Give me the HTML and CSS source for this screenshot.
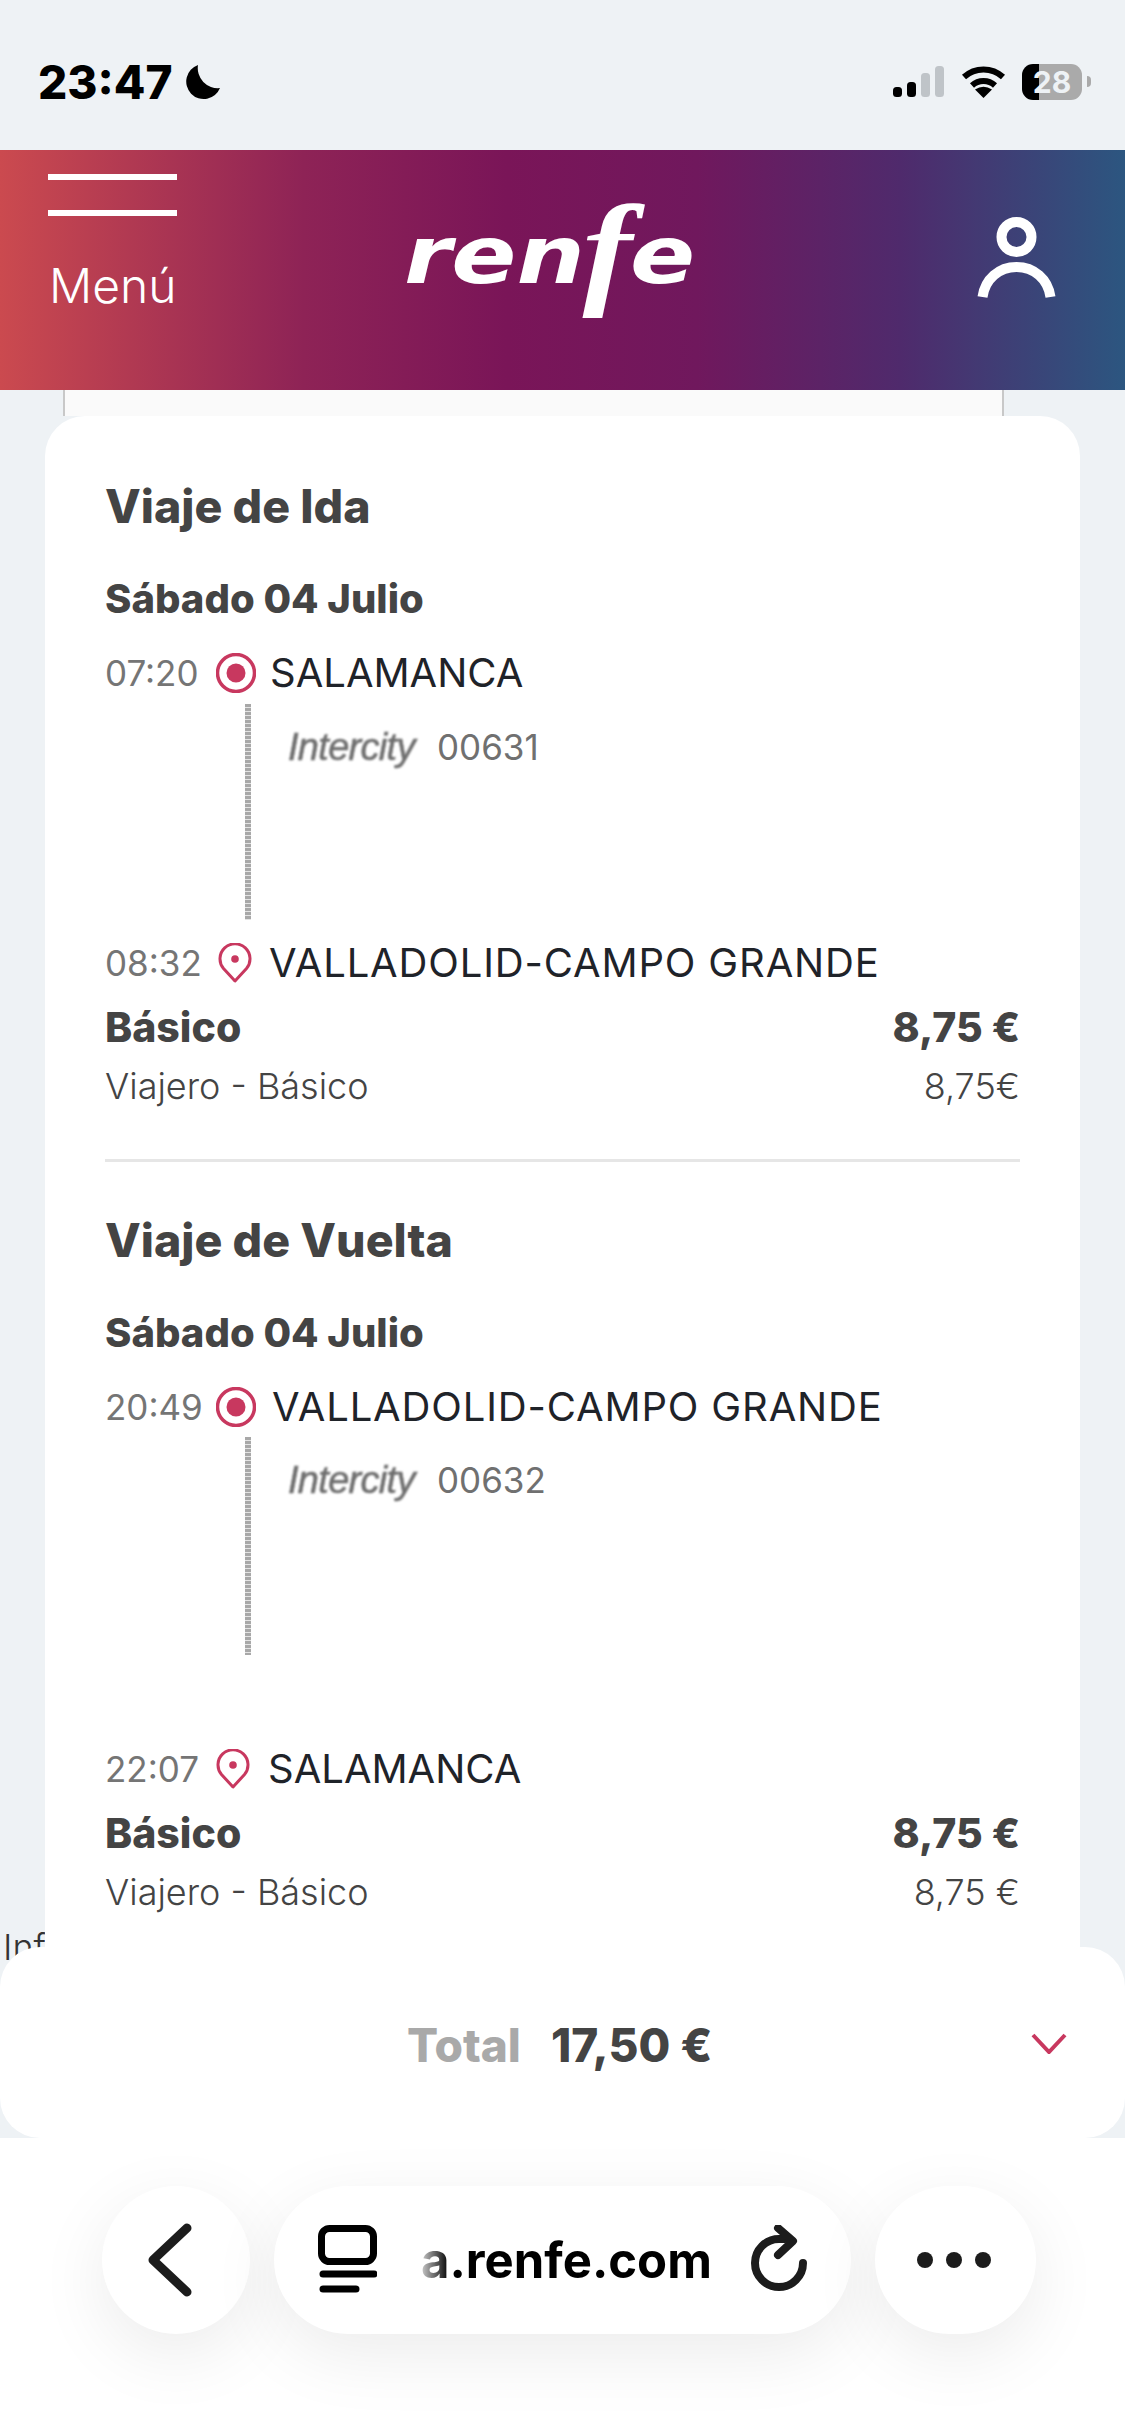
FILE: index.html
```html
<!DOCTYPE html>
<html lang="es">
<head>
  <meta charset="UTF-8">
  <title>Renfe - Resumen del viaje</title>
  <link rel="stylesheet" href="styles.css">
</head>
<body>
  <div id="page">
    <div class="status-bar">
      <div class="status-left">
        <span class="clock">23:47</span>
        <svg class="moon" viewBox="0 0 36 35" width="36" height="35"><path d="M14 0A17.5 17.5 0 1 0 36 23A20 20 0 0 1 14 0Z" fill="#000"/></svg>
      </div>
      <div class="status-right">
        <svg viewBox="0 0 51 31" width="51" height="31">
          <rect x="0" y="21" width="9" height="10" rx="3.5" fill="#000"/>
          <rect x="14" y="16" width="9" height="15" rx="3.5" fill="#000"/>
          <rect x="28" y="7" width="9" height="24" rx="3.5" fill="#bfc4c8"/>
          <rect x="42" y="0" width="9" height="31" rx="3.5" fill="#bfc4c8"/>
        </svg>
        <svg class="wifi" viewBox="0 0 45 33" width="45" height="33">
          <path d="M3 12A29 29 0 0 1 42 12" fill="none" stroke="#000" stroke-width="6"/>
          <path d="M11 20.5A17 17 0 0 1 34 20.5" fill="none" stroke="#000" stroke-width="6"/>
          <path d="M22.5 33L14 24.5Q22.5 19 31 24.5Z" fill="#000"/>
        </svg>
        <div class="battery">28</div>
      </div>
    </div>

    <header class="topbar">
      <div class="menu">
        <span class="menu-line"></span>
        <span class="menu-line"></span>
        <span class="menu-label">Menú</span>
      </div>
      <div class="logo"><span>ren</span><span class="logo-f">f</span><span>e</span></div>
      <svg class="user" viewBox="0 0 79 81" width="79" height="81">
        <circle cx="39.5" cy="20" r="15" fill="none" stroke="#fff" stroke-width="10"/>
        <path d="M5.5 80C8 62 22 50 39.5 50C57 50 71 62 73.5 80" fill="none" stroke="#fff" stroke-width="10"/>
      </svg>
    </header>

    <main class="content">
      <div class="behind-text">Información</div>
      <div class="backdrop"></div>
      <section class="card">
        <h2 class="trip-title">Viaje de Ida</h2>
        <h3 class="trip-date">Sábado 04 Julio</h3>
        <div class="stop stop-first">
          <span class="time">07:20</span>
          <svg class="stop-icon" viewBox="0 0 40 40" width="40" height="40"><circle cx="20" cy="20" r="18.5" fill="none" stroke="#c8385f" stroke-width="3.5"/><circle cx="20" cy="20" r="9.5" fill="#c8385f"/></svg>
          <span class="station">SALAMANCA</span>
        </div>
        <div class="leg">
          <span class="leg-line"></span>
          <span class="train-logo">Intercity</span>
          <span class="train-number">00631</span>
        </div>
        <div class="stop stop-arrival">
          <span class="time">08:32</span>
          <svg class="stop-icon" viewBox="0 0 34 40" width="34" height="40"><path d="M17 38L5.500 25.500A15 15 0 1 1 28.500 25.500Z" fill="none" stroke="#c8385f" stroke-width="3" stroke-linejoin="round"/><circle cx="17" cy="16" r="3.800" fill="#c8385f"/></svg>
          <span class="station station-long">VALLADOLID-CAMPO GRANDE</span>
        </div>
        <div class="fare">
          <span>Básico</span>
          <span>8,75 €</span>
        </div>
        <div class="fare-detail">
          <span>Viajero - Básico</span>
          <span>8,75€</span>
        </div>
        <div class="divider"></div>
        <h2 class="trip-title trip-title-next">Viaje de Vuelta</h2>
        <h3 class="trip-date">Sábado 04 Julio</h3>
        <div class="stop stop-return">
          <span class="time">20:49</span>
          <svg class="stop-icon" viewBox="0 0 40 40" width="40" height="40"><circle cx="20" cy="20" r="18.5" fill="none" stroke="#c8385f" stroke-width="3.5"/><circle cx="20" cy="20" r="9.5" fill="#c8385f"/></svg>
          <span class="station station-long">VALLADOLID-CAMPO GRANDE</span>
        </div>
        <div class="leg leg-return">
          <span class="leg-line"></span>
          <span class="train-logo">Intercity</span>
          <span class="train-number">00632</span>
        </div>
        <div class="stop stop-last">
          <span class="time">22:07</span>
          <svg class="stop-icon" viewBox="0 0 34 40" width="34" height="40"><path d="M17 38L5.500 25.500A15 15 0 1 1 28.500 25.500Z" fill="none" stroke="#c8385f" stroke-width="3" stroke-linejoin="round"/><circle cx="17" cy="16" r="3.800" fill="#c8385f"/></svg>
          <span class="station">SALAMANCA</span>
        </div>
        <div class="fare">
          <span>Básico</span>
          <span>8,75 €</span>
        </div>
        <div class="fare-detail">
          <span>Viajero - Básico</span>
          <span>8,75 €</span>
        </div>
      </section>
    </main>

    <div class="total">
      <span class="total-label">Total</span>
      <span class="total-amount">17,50 €</span>
      <svg class="total-arrow" viewBox="0 0 36 21" width="36" height="21"><path d="M2 2L18 19L34 2" fill="none" stroke="#c8385f" stroke-width="4"/></svg>
    </div>

    <nav class="toolbar">
      <div class="pill pill-back">
        <svg viewBox="0 0 46 74" width="46" height="74"><path d="M40 5L6 37L40 69" fill="none" stroke="#1c1c1c" stroke-width="9" stroke-linecap="round" stroke-linejoin="round"/></svg>
      </div>
      <div class="pill pill-url">
        <svg viewBox="0 0 59 70" width="59" height="70">
          <rect x="3.500" y="3.500" width="52" height="33" rx="8" fill="none" stroke="#000" stroke-width="7"/>
          <path d="M5 49H56" stroke="#000" stroke-width="7" stroke-linecap="round"/>
          <path d="M5 64H38" stroke="#000" stroke-width="7" stroke-linecap="round"/>
        </svg>
        <span class="url-text">a.renfe.com</span>
        <svg class="reload" viewBox="0 0 58 70" width="58" height="70"><path d="M52 38A24 24 0 1 1 28 14H34" fill="none" stroke="#1c1c1c" stroke-width="8" stroke-linecap="round"/><path d="M27 3L42 16L27 30" fill="none" stroke="#1c1c1c" stroke-width="8" stroke-linecap="round" stroke-linejoin="round"/></svg>
      </div>
      <div class="pill pill-more">
        <span class="dot"></span><span class="dot"></span><span class="dot"></span>
      </div>
    </nav>
  </div>
</body>
</html>
```

FILE: styles.css
```css
body, html {
  margin: 0;
  padding: 0;
  background: #eef2f5;
  font-family: 'Inter', 'Liberation Sans', sans-serif;
}
#page {
  width: 1125px;
  height: 2436px;
  overflow: hidden;
  display: flex;
  flex-direction: column;
}

/* status bar */
.status-bar {
  height: 150px;
  flex: none;
  display: flex;
  justify-content: space-between;
  padding: 56px 43px 0 38px;
  box-sizing: border-box;
}
.status-left {
  display: flex;
  gap: 12px;
  height: 52px;
  align-items: center;
}
.clock {
  font-size: 46px;
  line-height: 52px;
  font-weight: 800;
  color: #000;
}
.status-right {
  display: flex;
  align-items: flex-start;
  height: 44px;
  margin-top: 8px;
}
.status-right svg {
  flex: none;
  margin-top: 2px;
}
.status-right .wifi {
  margin-left: 17px;
  margin-top: 1px;
}
.battery {
  position: relative;
  width: 60px;
  height: 36px;
  margin-left: 16px;
  border-radius: 11px;
  background: linear-gradient(90deg, #000 17px, #aaaaaa 17px);
  color: #eef2f5;
  font-size: 30px;
  font-weight: 700;
  line-height: 36px;
  text-align: center;
}
.battery::after {
  content: "";
  position: absolute;
  left: 65px;
  top: 12px;
  width: 4px;
  height: 11px;
  border-radius: 0 4px 4px 0;
  background: #aaaaaa;
}

/* renfe header */
.topbar {
  height: 240px;
  flex: none;
  display: flex;
  padding-left: 48px;
  color: #fff;
  background: linear-gradient(90deg, #cb4a4f 0%, #8e2356 27%, #7a1558 45%, #70185d 62%, #4f2a6c 80%, #2c5680 100%);
  box-sizing: border-box;
}
.menu {
  display: flex;
  flex-direction: column;
  width: 129px;
  padding-top: 24px;
}
.menu-line {
  height: 6px;
  background: #fff;
  margin-bottom: 30px;
}
.menu-label {
  margin-top: 12px;
  margin-left: 1px;
  font-size: 48px;
  line-height: 56px;
  font-weight: 300;
}
.logo {
  margin-left: 227px;
  margin-top: 49px;
  font-family: 'DejaVu Sans', sans-serif;
  font-size: 80px;
  line-height: 100px;
  height: 100px;
  font-weight: 700;
  font-style: italic;
  white-space: nowrap;
  transform: scaleX(1.2);
  transform-origin: left center;
}
.logo-f {
  font-family: 'Liberation Serif', serif;
  font-size: 125px;
  font-weight: 700;
  margin: 0 -2px;
  vertical-align: -8px;
}
.user {
  margin-left: auto;
  margin-right: 69px;
  margin-top: 67px;
}

/* content */
.content {
  position: relative;
  height: 1597px;
  flex: none;
  padding: 0 45px;
}
.behind-text {
  position: absolute;
  left: 3px;
  top: 1535px;
  font-size: 36px;
  line-height: 44px;
  font-weight: 300;
  color: #333;
}
.backdrop {
  height: 26px;
  margin: 0 76px 0 18px;
  background: #fafafa;
  border-left: 2px solid #c8c8c8;
  border-right: 2px solid #c8c8c8;
}
.card {
  position: relative;
  height: 1600px;
  padding: 62px 60px 0;
  box-sizing: border-box;
  background: #fff;
  border-radius: 40px 40px 0 0;
  color: #444;
}
.trip-title {
  margin: 0;
  font-size: 46.5px;
  line-height: 56px;
  font-weight: 800;
  color: #444;
}
.trip-title-next {
  margin-top: 50px;
}
.trip-date {
  margin: 41px 0 0;
  font-size: 40px;
  line-height: 48px;
  font-weight: 800;
  color: #444;
}
.stop {
  display: flex;
  align-items: center;
  height: 48px;
  margin-top: 26px;
}
.stop-arrival {
  margin-top: 19px;
}
.stop-last {
  margin-top: 90px;
}
.time {
  width: 107px;
  font-size: 35px;
  color: #757575;
  flex: none;
}
.stop-icon {
  flex: none;
  margin-left: 4px;
}
.stop-arrival .stop-icon {
  margin-left: 6px;
}
.station {
  margin-left: 14px;
  font-size: 40px;
  line-height: 48px;
  color: #1f2329;
  white-space: nowrap;
}
.station-long {
  letter-spacing: 0.85px;
}
.stop-arrival .station {
  margin-left: 17px;
}
.stop-return .station {
  margin-left: 16px;
}
.stop-last .station {
  margin-left: 18px;
}
.leg {
  display: flex;
  align-items: flex-start;
  height: 216px;
  margin-top: 7px;
  padding-left: 140px;
}
.leg-return {
  height: 218px;
  margin-top: 6px;
}
.leg-line {
  width: 6px;
  height: 100%;
  background: repeating-linear-gradient(180deg, #a8a8a8 0, #a8a8a8 3px, #e4e4e4 3px, #e4e4e4 4px);
}
.train-logo {
  margin: 21px 0 0 37px;
  width: 130px;
  font-family: 'Liberation Sans', sans-serif;
  font-size: 38px;
  line-height: 44px;
  font-style: italic;
  letter-spacing: -0.7px;
  color: #6e6e6e;
  -webkit-text-stroke: 0.6px #6e6e6e;
  filter: blur(1px);
  white-space: nowrap;
}
.train-number {
  margin: 21px 0 0 19px;
  font-size: 35px;
  line-height: 44px;
  color: #707070;
}
.fare, .fare-detail {
  display: flex;
  justify-content: space-between;
}
.fare {
  margin-top: 16px;
  font-size: 41px;
  line-height: 48px;
  font-weight: 800;
}
.fare-detail {
  margin-top: 13px;
  font-size: 36px;
  line-height: 44px;
  font-weight: 300;
}
.divider {
  height: 3px;
  margin-top: 51px;
  background: #e6e6e6;
}

/* total */
.total {
  position: relative;
  height: 191px;
  flex: none;
  margin-top: -40px;
  display: flex;
  align-items: center;
  padding: 5px 0 0 407px;
  box-sizing: border-box;
  background: #fff;
  border-radius: 40px;
  font-size: 46px;
  font-weight: 800;
}
.total-label {
  color: #a9a9a9;
}
.total-amount {
  margin-left: 30px;
  color: #444;
}
.total-arrow {
  position: absolute;
  left: 1031px;
  top: 86px;
}

/* browser toolbar */
.toolbar {
  flex: 1;
  display: flex;
  gap: 24px;
  padding: 48px 0 0 102px;
  background: #fff;
  position: relative;
}
.pill {
  height: 148px;
  display: flex;
  align-items: center;
  background: #fff;
  border-radius: 74px;
  box-shadow: 0 20px 70px rgba(0, 0, 0, 0.08);
  box-sizing: border-box;
}
.pill-back {
  width: 148px;
  justify-content: center;
}
.pill-back svg {
  margin-right: 12px;
}
.pill-url {
  width: 577px;
  padding: 0 42px 0 44px;
}
.url-text {
  margin-left: 44px;
  font-size: 49px;
  font-weight: 700;
  color: #000;
  white-space: nowrap;
  -webkit-mask-image: linear-gradient(90deg, rgba(0,0,0,0.2) 0, #000 28px);
  mask-image: linear-gradient(90deg, rgba(0,0,0,0.2) 0, #000 28px);
}
.reload {
  margin-left: auto;
}
.pill-more {
  width: 161px;
  justify-content: center;
  gap: 13px;
  padding-right: 3px;
}
.dot {
  width: 16px;
  height: 16px;
  border-radius: 50%;
  background: #1c1c1c;
}
```
